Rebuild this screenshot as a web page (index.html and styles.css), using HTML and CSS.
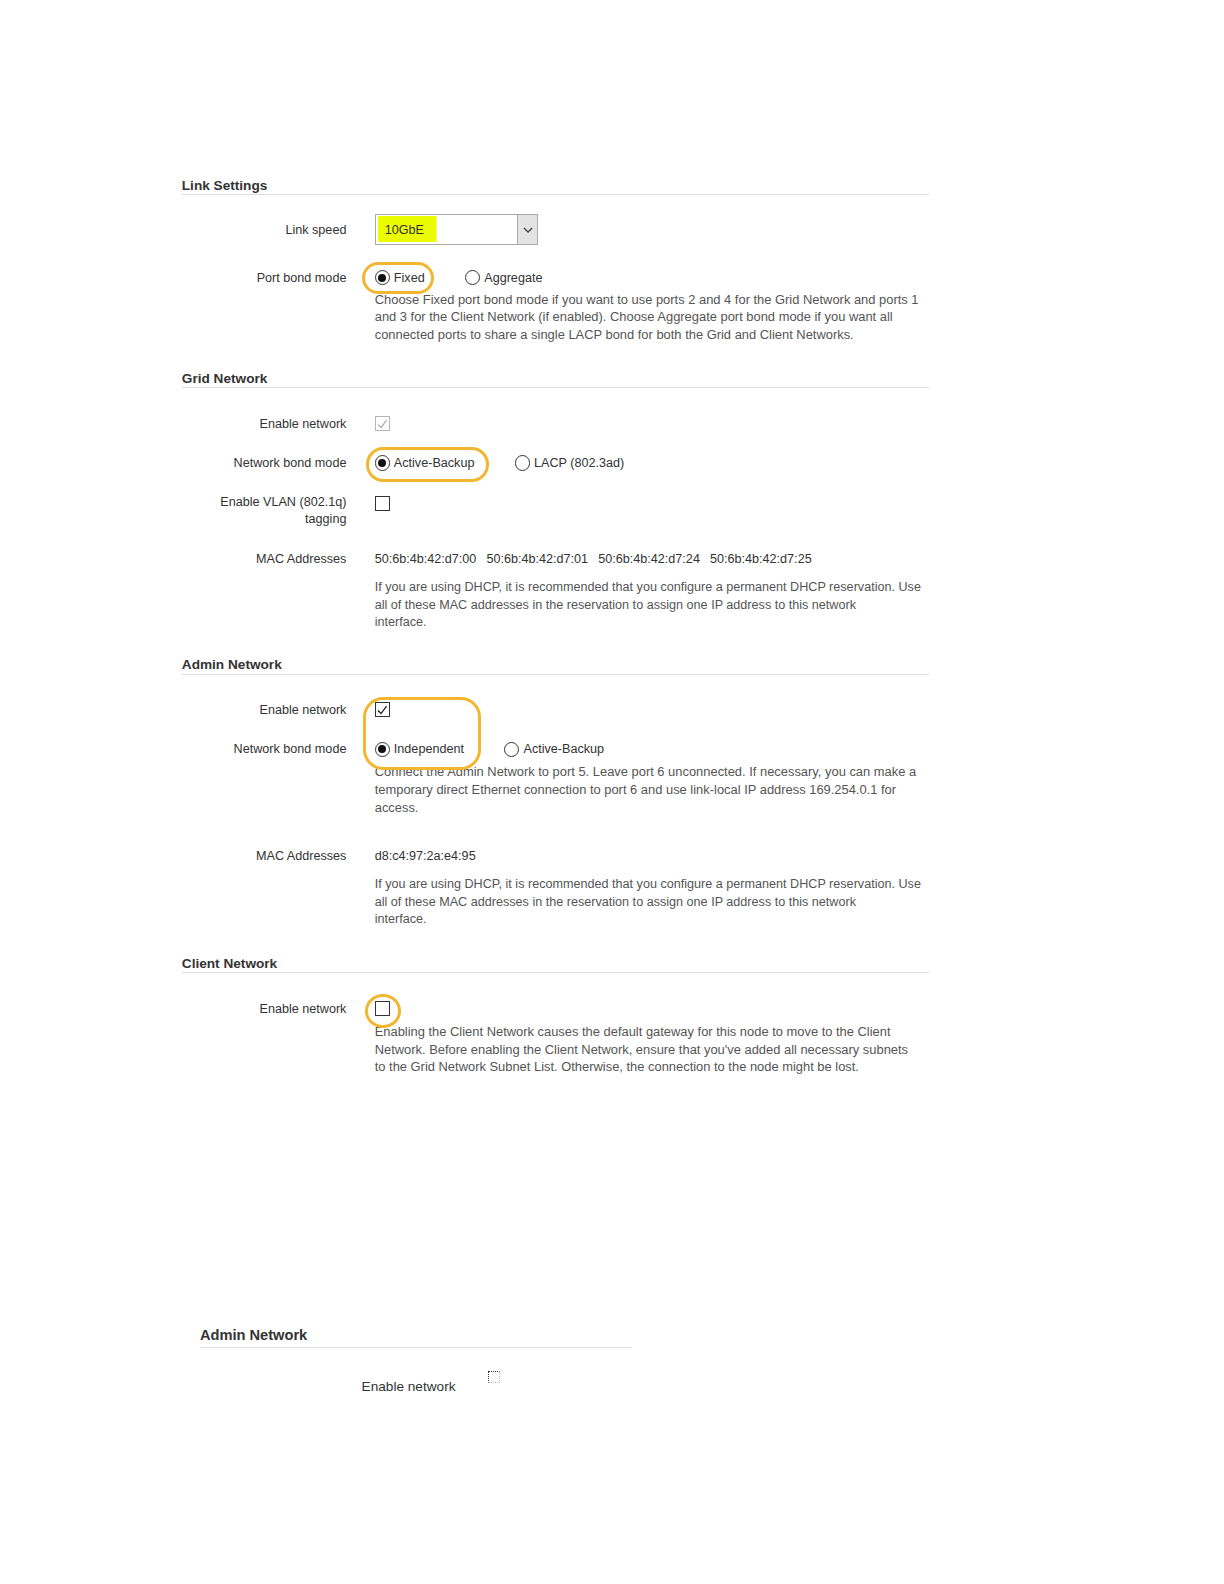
FILE: index.html
```html
<!DOCTYPE html>
<html>
<head>
<meta charset="utf-8">
<link rel="stylesheet" href="styles.css">
</head>
<body>
<div class="page">
  <section class="sec sec-link">
    <h2 class="sec-title">Link Settings</h2>
    <div class="row row-speed">
      <div class="label">Link speed</div>
      <div class="ctrl">
        <div class="select">
          <span class="select-val">10GbE</span>
          <span class="select-arrow"><svg width="10" height="6" viewBox="0 0 10 6"><path d="M1 1 L5 5 L9 1" fill="none" stroke="#444" stroke-width="1.3"/></svg></span>
        </div>
      </div>
    </div>
    <div class="row r-portbond">
      <div class="label">Port bond mode</div>
      <div class="ctrl">
        <span class="hl hl-fixed"></span>
        <span class="opt"><span class="radio on"></span>Fixed</span>
        <span class="opt"><span class="radio"></span>Aggregate</span>
      </div>
    </div>
    <div class="help h-port">Choose Fixed port bond mode if you want to use ports 2 and 4 for the Grid Network and ports 1<br>and 3 for the Client Network (if enabled). Choose Aggregate port bond mode if you want all<br>connected ports to share a single LACP bond for both the Grid and Client Networks.</div>
  </section>

  <section class="sec sec-grid">
    <h2 class="sec-title">Grid Network</h2>
    <div class="row r-enable1">
      <div class="label">Enable network</div>
      <div class="ctrl"><span class="cb cb-disabled"><svg width="12" height="12" viewBox="0 0 12 12"><path d="M2 6.5 L5 9.5 L10.5 2" fill="none" stroke="#aaa" stroke-width="1.2"/></svg></span></div>
    </div>
    <div class="row r-gridbond">
      <div class="label">Network bond mode</div>
      <div class="ctrl">
        <span class="hl hl-ab"></span>
        <span class="opt"><span class="radio on"></span>Active-Backup</span>
        <span class="opt"><span class="radio"></span>LACP (802.3ad)</span>
      </div>
    </div>
    <div class="row r-vlan">
      <div class="label label-2">Enable VLAN (802.1q)<br>tagging</div>
      <div class="ctrl ctrl-top"><span class="cb"></span></div>
    </div>
    <div class="row r-mac1">
      <div class="label">MAC Addresses</div>
      <div class="ctrl macs"><span class="mac">50:6b:4b:42:d7:00</span><span class="mac">50:6b:4b:42:d7:01</span><span class="mac">50:6b:4b:42:d7:24</span><span class="mac">50:6b:4b:42:d7:25</span></div>
    </div>
    <div class="help help-mac">If you are using DHCP, it is recommended that you configure a permanent DHCP reservation. Use<br>all of these MAC addresses in the reservation to assign one IP address to this network<br>interface.</div>
  </section>

  <section class="sec sec-admin">
    <h2 class="sec-title">Admin Network</h2>
    <div class="row r-enable2">
      <div class="label">Enable network</div>
      <div class="ctrl">
        <span class="hl hl-admin"></span>
        <span class="cb cb-on"><svg width="12" height="12" viewBox="0 0 12 12"><path d="M2 6.5 L5 9.5 L10.5 2" fill="none" stroke="#222" stroke-width="1.3"/></svg></span>
      </div>
    </div>
    <div class="row r-adminbond">
      <div class="label">Network bond mode</div>
      <div class="ctrl">
        <span class="opt"><span class="radio on"></span>Independent</span>
        <span class="opt"><span class="radio"></span>Active-Backup</span>
      </div>
    </div>
    <div class="help h-admin">Connect the Admin Network to port 5. Leave port 6 unconnected. If necessary, you can make a<br>temporary direct Ethernet connection to port 6 and use link-local IP address 169.254.0.1 for<br>access.</div>
    <div class="row r-mac2">
      <div class="label">MAC Addresses</div>
      <div class="ctrl macs"><span class="mac">d8:c4:97:2a:e4:95</span></div>
    </div>
    <div class="help help-mac">If you are using DHCP, it is recommended that you configure a permanent DHCP reservation. Use<br>all of these MAC addresses in the reservation to assign one IP address to this network<br>interface.</div>
  </section>

  <section class="sec sec-client">
    <h2 class="sec-title">Client Network</h2>
    <div class="row r-enable3">
      <div class="label">Enable network</div>
      <div class="ctrl">
        <span class="hl hl-client"></span>
        <span class="cb"></span>
      </div>
    </div>
    <div class="help h-client">Enabling the Client Network causes the default gateway for this node to move to the Client<br>Network. Before enabling the Client Network, ensure that you've added all necessary subnets<br>to the Grid Network Subnet List. Otherwise, the connection to the node might be lost.</div>
  </section>

  <section class="snippet">
    <h2 class="snip-title">Admin Network</h2>
    <div class="snip-row">
      <div class="snip-label">Enable network</div>
      <span class="cb cb-focus"></span>
    </div>
  </section>
</div>
</body>
</html>
```

FILE: styles.css
```css
html, body {
  margin: 0;
  padding: 0;
  background: #ffffff;
}
body {
  font-family: "Liberation Sans", Arial, sans-serif;
  color: #333;
}
.page {
  zoom: 1.01;
  padding-top: 174px;
  padding-left: 180px;
  padding-bottom: 100px;
}
.sec {
  width: 740px;
}
.sec-title {
  margin: 0;
  font-size: 13.5px;
  line-height: 16px;
  font-weight: bold;
  color: #333;
  padding-top: 2px;
  padding-bottom: 0;
  border-bottom: 1px solid #dddddd;
}
.sec-grid { margin-top: 25px; }
.sec-admin { margin-top: 23px; }
.sec-client { margin-top: 25px; }

.row {
  display: grid;
  grid-template-columns: 163px 1fr;
  column-gap: 28px;
  align-items: center;
  font-size: 12.5px;
  line-height: 18px;
}
.label {
  text-align: right;
  color: #333;
}
.label-2 { line-height: 17px; }
.ctrl {
  position: relative;
  display: flex;
  align-items: center;
  gap: 40px;
  color: #333;
}
.ctrl-top { align-self: start; padding-top: 2px; }

.row-speed { margin-top: 19px; }
.r-portbond { margin-top: 23px; }
.r-enable1 { margin-top: 26px; }
.r-gridbond { margin-top: 21px; }
.r-vlan { margin-top: 22px; }
.r-mac1 { margin-top: 21px; }
.r-enable2 { margin-top: 26px; }
.r-adminbond { margin-top: 21px; }
.r-mac2 { margin-top: 30px; }
.r-enable3 { margin-top: 26px; }

.help {
  margin-left: 191px;
  width: 560px;
  font-size: 12.8px;
  line-height: 17.5px;
  color: #555;
  white-space: nowrap;
}
.help-mac { margin-top: 11px; font-size: 12.5px; }
.h-port { margin-top: 4px; }
.h-admin { margin-top: 5px; }
.h-client { margin-top: 5px; }

/* select */
.select {
  width: 160px;
  height: 29px;
  border: 1px solid #a9a9a9;
  display: flex;
  align-items: stretch;
  background: #fff;
}
.select-val {
  flex: 1;
  display: flex;
  align-items: center;
  font-size: 12.5px;
  background: linear-gradient(#ecfc00, #ecfc00) no-repeat 2px 1px / 58px 26px;
  padding-left: 9px;
  color: #333;
}
.select-arrow {
  width: 19px;
  background: #e3e3e3;
  border-left: 1px solid #a9a9a9;
  display: flex;
  align-items: center;
  justify-content: center;
}

/* radio */
.opt {
  display: inline-flex;
  align-items: center;
  gap: 4px;
}
.radio {
  width: 13px;
  height: 13px;
  border: 1px solid #333;
  border-radius: 50%;
  box-sizing: content-box;
  display: inline-flex;
  align-items: center;
  justify-content: center;
  background: #fff;
}
.radio.on::after {
  content: "";
  width: 8px;
  height: 8px;
  border-radius: 50%;
  background: #111;
}

/* checkbox */
.cb {
  width: 13px;
  height: 13px;
  border: 1px solid #333;
  background: #fff;
  display: inline-flex;
  align-items: center;
  justify-content: center;
  box-sizing: content-box;
}
.cb-disabled { border-color: #b5b5b5; }
.cb-focus {
  width: 10px;
  height: 10px;
  border: 1px dotted #333;
  border-right-color: #bbb;
  border-bottom-color: #bbb;
}

/* highlight rings */
.hl {
  position: absolute;
  border: 3px solid #f2b630;
  box-sizing: border-box;
  pointer-events: none;
}
.hl-fixed { left: -13px; top: -7px; width: 72px; height: 32px; border-radius: 16px; }
.hl-ab { left: -9px; top: -7px; width: 122px; height: 35px; border-radius: 17px; }
.hl-admin { left: -12px; top: -5px; width: 117px; height: 72px; border-radius: 20px; }
.hl-client { left: -10px; top: -7px; width: 36px; height: 33px; border-radius: 50%; }

.macs { gap: 10px; }

/* snippet */
.snippet {
  margin-top: 248px;
  margin-left: 18px;
  width: 428px;
}
.snip-title {
  margin: 0;
  font-size: 14.5px;
  line-height: 18px;
  font-weight: bold;
  color: #333;
  padding-bottom: 2px;
  border-bottom: 1px solid #e0e0e0;
}
.snip-row {
  display: grid;
  grid-template-columns: 253px 14px;
  column-gap: 32px;
  margin-top: 23px;
}
.snip-label {
  text-align: right;
  font-size: 13.5px;
  line-height: 18px;
  margin-top: 7px;
  color: #333;
}
```
